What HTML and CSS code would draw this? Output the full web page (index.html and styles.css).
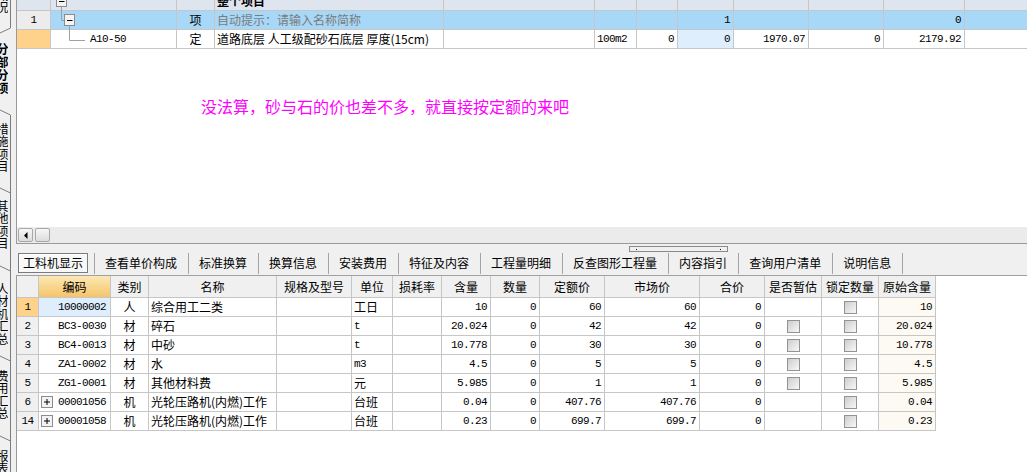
FILE: index.html
```html
<!DOCTYPE html>
<html lang="zh-CN">
<head>
<meta charset="utf-8">
<title>工料机显示</title>
<link rel="stylesheet" href="styles.css">
</head>
<body>
<div class="app">
  <aside class="side">
    <svg class="side-lines" width="16" height="472" viewBox="0 0 16 472">
      <g stroke="#7c7c7c" stroke-width="1" fill="none">
        <path d="M10.5 0V28L0 33"/>
        <path d="M0 110L10.5 115V472"/>
        <path d="M0 188L10.5 193"/>
        <path d="M0 266L10.5 271"/>
        <path d="M0 356L10.5 361"/>
        <path d="M0 436L10.5 441"/>
      </g>
    </svg>
    <div class="vtab t0">工程概况</div>
    <div class="vtab t1 on">分部分项</div>
    <div class="vtab t2">措施项目</div>
    <div class="vtab t3">其他项目</div>
    <div class="vtab t4">人材机汇总</div>
    <div class="vtab t5">费用汇总</div>
    <div class="vtab t6">报表</div>
  </aside>

  <main class="main">
    <section class="top-pane">
      <div class="top-body">
        <div class="top-grid">
          <svg class="tree-lines" width="125" height="57" viewBox="51 -8 125 57">
            <g fill="none" stroke="#a0a0a0">
              <path d="M61.5 7V20.5H64"/>
              <path d="M69.5 26V40.5H85"/>
            </g>
            <rect x="56.5" y="-3.5" width="10" height="10" fill="#f4f4f4" stroke="#8c8c8c"/>
            <path d="M59 1.5H64.5" stroke="#000"/>
            <rect x="64.5" y="14.5" width="10" height="11" fill="#f4f4f4" stroke="#8c8c8c"/>
            <path d="M67 20.5H72.5" stroke="#000"/>
          </svg>
          <div class="trow r0">
            <div class="c rn"></div><div class="c"></div><div class="c"></div>
            <div class="c name b">整个项目</div>
            <div class="c"></div><div class="c"></div><div class="c"></div><div class="c"></div>
            <div class="c"></div><div class="c"></div><div class="c"></div><div class="c end"></div>
          </div>
          <div class="trow r1">
            <div class="c rn n">1</div><div class="c"></div>
            <div class="c ctr">项</div>
            <div class="c name hint">自动提示：请输入名称简称</div>
            <div class="c"></div><div class="c"></div><div class="c"></div>
            <div class="c r n">1</div>
            <div class="c"></div><div class="c"></div>
            <div class="c r n">0</div>
            <div class="c end"></div>
          </div>
          <div class="trow r2">
            <div class="c rn hl"></div>
            <div class="c tree n">A10-50</div>
            <div class="c ctr">定</div>
            <div class="c name">道路底层 人工级配砂石底层 厚度(15cm)</div>
            <div class="c"></div>
            <div class="c l n">100m2</div>
            <div class="c r n">0</div>
            <div class="c r n sel">0</div>
            <div class="c r n">1970.07</div>
            <div class="c r n">0</div>
            <div class="c r n">2179.92</div>
            <div class="c end"></div>
          </div>
        </div>
        <p class="note">没法算，砂与石的价也差不多，就直接按定额的来吧</p>
      </div>
      <div class="hscroll">
        <div class="sbtn">
          <svg width="4" height="7" viewBox="0 0 4 7"><path d="M3.5 0V7L0 3.5Z" fill="#000"/></svg>
        </div>
        <div class="sbtn"></div>
      </div>
    </section>

    <div class="splitter"><div class="grip"><span></span><span></span></div></div>

    <nav class="tabs">
      <div class="tab-sel">工料机显示</div>
      <div class="tab">查看单价构成</div>
      <div class="tab">标准换算</div>
      <div class="tab">换算信息</div>
      <div class="tab">安装费用</div>
      <div class="tab">特征及内容</div>
      <div class="tab">工程量明细</div>
      <div class="tab">反查图形工程量</div>
      <div class="tab">内容指引</div>
      <div class="tab">查询用户清单</div>
      <div class="tab last">说明信息</div>
    </nav>

    <section class="bottom-pane">
      <div class="brow bhead">
        <div class="c"></div>
        <div class="c code-h">编码</div>
        <div class="c">类别</div>
        <div class="c">名称</div>
        <div class="c">规格及型号</div>
        <div class="c">单位</div>
        <div class="c">损耗率</div>
        <div class="c">含量</div>
        <div class="c">数量</div>
        <div class="c">定额价</div>
        <div class="c">市场价</div>
        <div class="c">合价</div>
        <div class="c">是否暂估</div>
        <div class="c">锁定数量</div>
        <div class="c">原始含量</div>
      </div>

      <div class="brow">
        <div class="c rn n hl">1</div>
        <div class="c code sel"><span class="pm-gap"></span><span class="n">10000002</span></div>
        <div class="c ctr">人</div>
        <div class="c name">综合用工二类</div>
        <div class="c"></div>
        <div class="c unit">工日</div>
        <div class="c"></div>
        <div class="c r n">10</div>
        <div class="c r n">0</div>
        <div class="c r n">60</div>
        <div class="c r n">60</div>
        <div class="c r n">0</div>
        <div class="c chk"></div>
        <div class="c chk"><span class="cb"></span></div>
        <div class="c r n orig">10</div>
      </div>

      <div class="brow">
        <div class="c rn n">2</div>
        <div class="c code"><span class="pm-gap"></span><span class="n">BC3-0030</span></div>
        <div class="c ctr">材</div>
        <div class="c name">碎石</div>
        <div class="c"></div>
        <div class="c unit n">t</div>
        <div class="c"></div>
        <div class="c r n">20.024</div>
        <div class="c r n">0</div>
        <div class="c r n">42</div>
        <div class="c r n">42</div>
        <div class="c r n">0</div>
        <div class="c chk"><span class="cb"></span></div>
        <div class="c chk"><span class="cb"></span></div>
        <div class="c r n orig">20.024</div>
      </div>

      <div class="brow">
        <div class="c rn n">3</div>
        <div class="c code"><span class="pm-gap"></span><span class="n">BC4-0013</span></div>
        <div class="c ctr">材</div>
        <div class="c name">中砂</div>
        <div class="c"></div>
        <div class="c unit n">t</div>
        <div class="c"></div>
        <div class="c r n">10.778</div>
        <div class="c r n">0</div>
        <div class="c r n">30</div>
        <div class="c r n">30</div>
        <div class="c r n">0</div>
        <div class="c chk"><span class="cb"></span></div>
        <div class="c chk"><span class="cb"></span></div>
        <div class="c r n orig">10.778</div>
      </div>

      <div class="brow">
        <div class="c rn n">4</div>
        <div class="c code"><span class="pm-gap"></span><span class="n">ZA1-0002</span></div>
        <div class="c ctr">材</div>
        <div class="c name">水</div>
        <div class="c"></div>
        <div class="c unit n">m3</div>
        <div class="c"></div>
        <div class="c r n">4.5</div>
        <div class="c r n">0</div>
        <div class="c r n">5</div>
        <div class="c r n">5</div>
        <div class="c r n">0</div>
        <div class="c chk"><span class="cb"></span></div>
        <div class="c chk"><span class="cb"></span></div>
        <div class="c r n orig">4.5</div>
      </div>

      <div class="brow">
        <div class="c rn n">5</div>
        <div class="c code"><span class="pm-gap"></span><span class="n">ZG1-0001</span></div>
        <div class="c ctr">材</div>
        <div class="c name">其他材料费</div>
        <div class="c"></div>
        <div class="c unit">元</div>
        <div class="c"></div>
        <div class="c r n">5.985</div>
        <div class="c r n">0</div>
        <div class="c r n">1</div>
        <div class="c r n">1</div>
        <div class="c r n">0</div>
        <div class="c chk"><span class="cb"></span></div>
        <div class="c chk"><span class="cb"></span></div>
        <div class="c r n orig">5.985</div>
      </div>

      <div class="brow">
        <div class="c rn n">6</div>
        <div class="c code"><svg class="pm" width="12" height="12" viewBox="0 0 12 12"><rect x="0.5" y="0.5" width="11" height="11" fill="#f3f3f3" stroke="#8c8c8c"/><path d="M3 6H9M6 3V9" stroke="#000"/></svg><span class="n">00001056</span></div>
        <div class="c ctr">机</div>
        <div class="c name">光轮压路机(内燃)工作</div>
        <div class="c"></div>
        <div class="c unit">台班</div>
        <div class="c"></div>
        <div class="c r n">0.04</div>
        <div class="c r n">0</div>
        <div class="c r n">407.76</div>
        <div class="c r n">407.76</div>
        <div class="c r n">0</div>
        <div class="c chk"></div>
        <div class="c chk"><span class="cb"></span></div>
        <div class="c r n orig">0.04</div>
      </div>

      <div class="brow">
        <div class="c rn n">14</div>
        <div class="c code"><svg class="pm" width="12" height="12" viewBox="0 0 12 12"><rect x="0.5" y="0.5" width="11" height="11" fill="#f3f3f3" stroke="#8c8c8c"/><path d="M3 6H9M6 3V9" stroke="#000"/></svg><span class="n">00001058</span></div>
        <div class="c ctr">机</div>
        <div class="c name">光轮压路机(内燃)工作</div>
        <div class="c"></div>
        <div class="c unit">台班</div>
        <div class="c"></div>
        <div class="c r n">0.23</div>
        <div class="c r n">0</div>
        <div class="c r n">699.7</div>
        <div class="c r n">699.7</div>
        <div class="c r n">0</div>
        <div class="c chk"></div>
        <div class="c chk"><span class="cb"></span></div>
        <div class="c r n orig">0.23</div>
      </div>
    </section>
  </main>
</div>
</body>
</html>
```

FILE: styles.css
```css
* { box-sizing: border-box; }
html, body { margin: 0; padding: 0; }
body {
  width: 1027px;
  height: 472px;
  overflow: hidden;
  background: #f0f0f0;
  font-family: "Noto Sans CJK SC", "Liberation Sans", sans-serif;
  font-size: 12px;
  color: #000;
}
.app { display: flex; height: 472px; overflow: hidden; }

/* ---------- left vertical tab strip ---------- */
.side {
  position: relative;
  width: 16px;
  height: 472px;
  flex: none;
  display: flex;
  flex-direction: column;
  overflow: hidden;
}
.side-lines { position: absolute; left: 0; top: 0; }
.vtab {
  writing-mode: vertical-rl;
  width: 12px;
  margin-left: -4px;
  line-height: 12px;
  font-size: 12px;
  letter-spacing: 0.5px;
  flex: none;
  overflow: hidden;
  white-space: nowrap;
}
.vtab.on { font-weight: bold; letter-spacing: 1px; }
.t0 { margin-top: -36px; height: 66px; }
.t1 { height: 80px; padding-top: 13px; }
.t2 { height: 80px; padding-top: 13px; }
.t3 { height: 78px; padding-top: 10px; }
.t4 { height: 90px; padding-top: 15px; }
.t5 { height: 80px; padding-top: 12px; }
.t6 { height: 34px; padding-top: 12px; }

/* ---------- main area ---------- */
.main { flex: 1; display: flex; flex-direction: column; min-width: 0; height: 472px; }

.top-pane {
  height: 244px;
  flex: none;
  display: flex;
  flex-direction: column;
  border-left: 1px solid #9a9a9a;
  border-bottom: 1px solid #9a9a9a;
}
.top-body { flex: 1; background: #fff; overflow: hidden; }
.top-grid { position: relative; margin-top: -8px; }
.tree-lines { position: absolute; left: 34px; top: 0; }

.trow {
  display: grid;
  grid-template-columns: 34px 126px 38px 229px 151px 42px 41px 56px 75px 75px 81px 1fr;
  height: 19px;
}
.c {
  border-right: 1px solid #c6c6c6;
  border-bottom: 1px solid #c6c6c6;
  line-height: 18px;
  white-space: nowrap;
  overflow: hidden;
}
.c.end { border-right: none; }
.r0 .c { background: #dee5ee; }
.r1 .c { background: #a7d8f7; }
.r1 .c.rn { background: #ececec; }
.rn { text-align: center; }
.c.hl { background: #fed28b; }
.c.sel { background: #deeefc; }
.ctr { text-align: center; }
.r { text-align: right; padding-right: 3px; }
.l { padding-left: 2px; }
.name { padding-left: 2px; }
.b { font-weight: bold; }
.hint { color: #7c7c7c; }
.tree { padding-left: 39px; }
.n {
  font-family: "Liberation Mono", "DejaVu Sans Mono", monospace;
  font-size: 11px;
  letter-spacing: -0.6px;
}

.note {
  margin: 48px 0 0 184px;
  font-size: 16px;
  line-height: 18px;
  color: #ff00ff;
}

.hscroll {
  height: 16px;
  flex: none;
  background: #ebebeb;
  display: flex;
  align-items: flex-start;
  gap: 2px;
  padding: 1px 0 0 1px;
}
.sbtn {
  width: 15px;
  height: 14px;
  border: 1px solid #a8a8a8;
  border-radius: 2px;
  background: linear-gradient(#f7f7f7, #dcdcdc);
  display: flex;
  align-items: center;
  justify-content: center;
}

.splitter { height: 9px; flex: none; padding: 2px 0 0 613px; }
.grip {
  width: 99px;
  height: 6px;
  border: 1px solid #8a8a8a;
  display: flex;
  justify-content: space-between;
  align-items: center;
  padding: 0 6px;
}
.grip span { width: 1px; height: 1px; background: #000080; }

/* ---------- horizontal tabs ---------- */
.tabs {
  height: 23px;
  flex: none;
  display: flex;
  align-items: flex-start;
  padding-left: 2px;
  border-bottom: 1px solid #a0a0a0;
}
.tab-sel {
  width: 70px;
  height: 20px;
  margin-right: 6px;
  border: 1px solid #7c7c7c;
  background: #f8f8f8;
  box-shadow: inset 1px 1px 0 #ffffff;
  line-height: 18px;
  text-align: center;
  white-space: nowrap;
}
.tab {
  height: 21px;
  line-height: 20px;
  padding: 0 11px 0 10px;
  border-left: 1px solid #a4a4a4;
  white-space: nowrap;
}
.tab.last { border-right: 1px solid #a4a4a4; }

/* ---------- lower grid ---------- */
.bottom-pane {
  flex: 1;
  min-height: 0;
  overflow: hidden;
  background: #fff;
  border-left: 1px solid #9a9a9a;
}
.brow {
  display: grid;
  grid-template-columns: 22px 72px 38px 128px 75px 41px 49px 49px 49px 65px 95px 65px 57px 57px 57px;
  width: 919px;
  height: 19px;
}
.bhead { height: 22px; }
.bhead .c {
  background: #f0f0f0;
  text-align: center;
  line-height: 21px;
}
.bhead .c.code-h { background: linear-gradient(#fce8b6, #f5c46a); }
.brow .rn { background: #f0f0f0; }
.brow .rn.hl { background: #fed28b; }
.code { display: flex; align-items: center; padding-left: 2px; }
.pm-gap { width: 12px; flex: none; margin-right: 5px; }
.pm { flex: none; margin-right: 5px; }
.unit { padding-left: 2px; }
.orig { background: #fdfaf3; }
.chk { display: flex; align-items: center; justify-content: center; }
.cb {
  display: block;
  width: 13px;
  height: 13px;
  border: 1px solid #939393;
  background: linear-gradient(135deg, #cdcdcd, #f8f8f8);
}
```
